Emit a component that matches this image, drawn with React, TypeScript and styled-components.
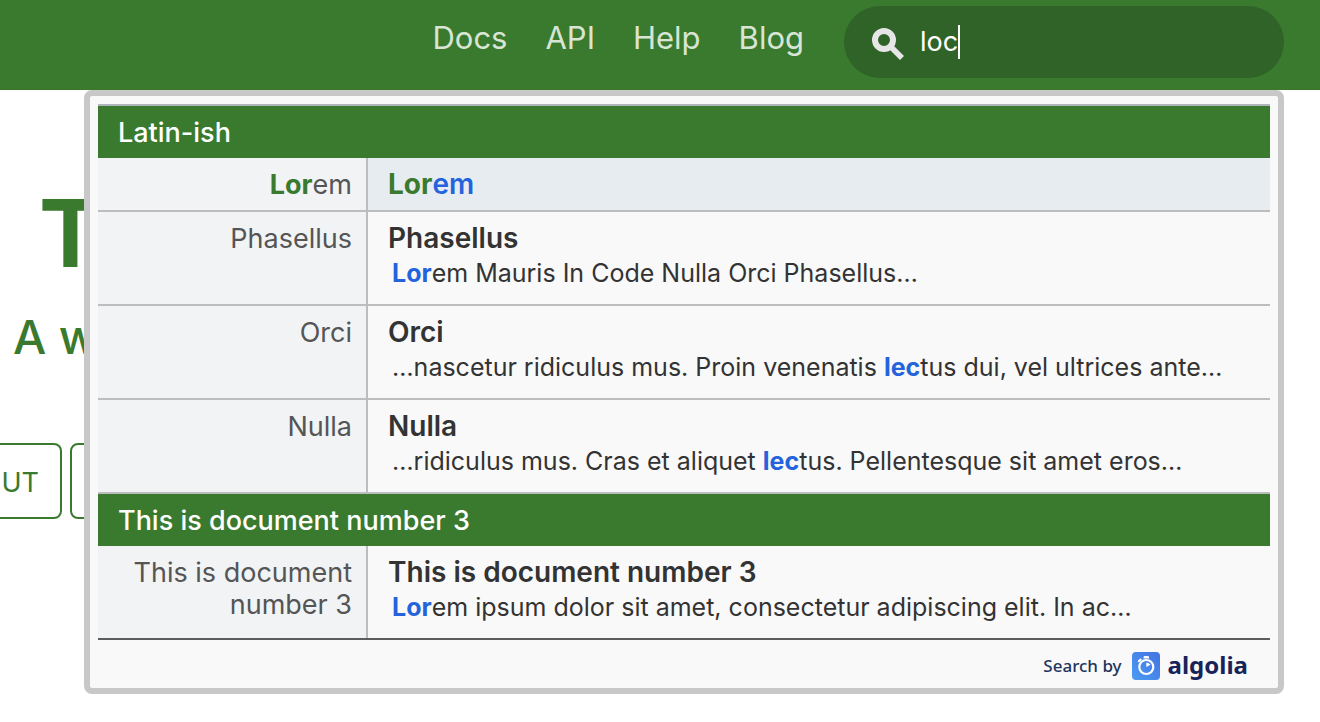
import React, { useState } from 'react';
import styled, { createGlobalStyle } from 'styled-components';

const green = '#3a7a2e';
const blue = '#2463dc';

const GlobalStyle = createGlobalStyle`
  *, *::before, *::after { box-sizing: border-box; }
  body {
    margin: 0;
    min-height: 100vh;
    background: #fff;
    color: #333;
    font-family: Inter, "Liberation Sans", sans-serif;
  }
`;

const Header = styled.header`
  position: relative;
  display: flex;
  justify-content: flex-end;
  gap: 40px;
  height: 90px;
  padding: 6px 36px 0 0;
  background: ${green};
`;

const Nav = styled.nav`
  display: flex;
  gap: 38px;
  padding-top: 12px;
`;

const NavLink = styled.a`
  color: #d8e5d5;
  font-size: 31px;
  font-weight: 400;
  line-height: 40px;
  text-decoration: none;
`;

const SearchBox = styled.label`
  display: flex;
  align-items: center;
  width: 440px;
  height: 72px;
  padding: 0 28px;
  border-radius: 36px;
  background: #2f6327;
`;

const SearchIcon = styled.svg`
  width: 32px;
  height: 32px;
  margin: 4px 16px 0 0;
`;

const SearchInput = styled.input`
  field-sizing: content;
  padding: 0;
  border: 0;
  outline: 0;
  background: transparent;
  color: #fff;
  caret-color: transparent;
  font-family: inherit;
  font-size: 27px;
  font-weight: 400;
  line-height: 36px;
`;

const Caret = styled.span`
  width: 2px;
  height: 34px;
  background: #fff;
`;

const Menu = styled.div`
  position: absolute;
  z-index: 1;
  top: 90px;
  left: 84px;
  right: 36px;
  padding: 8px;
  border: 6px solid #c8c8c8;
  border-radius: 8px;
  background: #f9f9f9;
`;

const Results = styled.div`
  border-top: 2px solid #b0b5bc;
  border-bottom: 2px solid #5c5c5e;
`;

const SectionTitle = styled.h2`
  margin: 0;
  padding: 11px 20px 9px;
  background: ${green};
  color: #fff;
  font-size: 27px;
  font-weight: 500;
  line-height: 32px;
`;

const Row = styled.a<{ $last?: boolean }>`
  display: grid;
  grid-template-columns: 270px 1fr;
  border-bottom: ${(p) => (p.$last ? 0 : '2px solid #bcbdbe')};
  color: #333;
  text-decoration: none;
`;

const Category = styled.span`
  padding: 11px 14px 9px;
  border-right: 2px solid #bcbdbe;
  background: #f1f3f5;
  color: #555;
  font-size: 27px;
  line-height: 32px;
  text-align: right;
`;

const Detail = styled.span<{ $active?: boolean; $short?: boolean }>`
  display: flex;
  flex-direction: column;
  gap: 3px;
  padding: 10px 20px ${(p) => (p.$short ? 10 : 15)}px;
  background: ${(p) => (p.$active ? '#e7ecf1' : 'transparent')};
`;

const Title = styled.span<{ $active?: boolean }>`
  color: ${(p) => (p.$active ? blue : '#333')};
  font-size: 28px;
  font-weight: 600;
  line-height: 32px;
`;

const Snippet = styled.span`
  padding-left: 4px;
  font-size: 25px;
  line-height: 32px;
  white-space: nowrap;
`;

const Mark = styled.b<{ $color: string }>`
  color: ${(p) => p.$color};
  font-weight: 700;
`;

const Footer = styled.footer`
  display: flex;
  align-items: center;
  justify-content: flex-end;
  height: 40px;
  padding: 12px 22px 0 0;
  color: #22355c;
  font-family: "Noto Sans", sans-serif;
  font-size: 17px;
  font-weight: 500;
  line-height: 24px;
`;

const Algolia = styled.a`
  display: flex;
  align-items: center;
  gap: 8px;
  margin-left: 10px;
  color: #182359;
  font-size: 24px;
  font-weight: 700;
  line-height: 28px;
  text-decoration: none;
`;

const Wordmark = styled.span`
  padding-bottom: 2px;
`;

const Hero = styled.main`
  padding-top: 85px;
  color: ${green};
`;

const HeroTitle = styled.h1`
  margin: 0;
  padding-left: 39px;
  font-size: 94px;
  font-weight: 700;
  line-height: 116px;
`;

const Tagline = styled.p`
  margin: 17px 0 77px;
  padding-left: 13px;
  font-size: 47px;
  font-weight: 500;
  line-height: 58px;
`;

const Actions = styled.div`
  display: flex;
  gap: 8px;
`;

const HeroButton = styled.button<{ $cut?: boolean }>`
  width: 62px;
  height: 76px;
  padding: 2px 21px 0 0;
  border: 2px solid ${green};
  border-left-width: ${(p) => (p.$cut ? 0 : 2)}px;
  border-radius: ${(p) => (p.$cut ? '0 8px 8px 0' : '8px')};
  background: #fff;
  color: ${green};
  font-family: inherit;
  font-size: 27px;
  text-align: right;
`;

type Part = string | { mark: string };
interface Hit {
  category: Part[];
  title: Part[];
  snippet?: Part[];
}

const sections: { name: string; hits: Hit[] }[] = [
  {
    name: 'Latin-ish',
    hits: [
      { category: [{ mark: 'Lor' }, 'em'], title: [{ mark: 'Lor' }, 'em'] },
      {
        category: ['Phasellus'],
        title: ['Phasellus'],
        snippet: [{ mark: 'Lor' }, 'em Mauris In Code Nulla Orci Phasellus…'],
      },
      {
        category: ['Orci'],
        title: ['Orci'],
        snippet: [
          '…nascetur ridiculus mus. Proin venenatis ',
          { mark: 'lec' },
          'tus dui, vel ultrices ante…',
        ],
      },
      {
        category: ['Nulla'],
        title: ['Nulla'],
        snippet: [
          '…ridiculus mus. Cras et aliquet ',
          { mark: 'lec' },
          'tus. Pellentesque sit amet eros…',
        ],
      },
    ],
  },
  {
    name: 'This is document number 3',
    hits: [
      {
        category: ['This is document number 3'],
        title: ['This is document number 3'],
        snippet: [{ mark: 'Lor' }, 'em ipsum dolor sit amet, consectetur adipiscing elit. In ac…'],
      },
    ],
  },
];

function Marked({ parts, color }: { parts: Part[]; color: string }) {
  return (
    <span>
      {parts.map((p, i) =>
        typeof p === 'string' ? p : <Mark key={i} $color={color}>{p.mark}</Mark>
      )}
    </span>
  );
}

function StopwatchLogo() {
  return (
    <svg width="28" height="28" viewBox="0 0 28 28" aria-hidden="true">
      <defs>
        <linearGradient id="tile" x1="0" y1="1" x2="1" y2="0">
          <stop offset="0" stopColor="#4a9cf3" />
          <stop offset="1" stopColor="#4472e2" />
        </linearGradient>
      </defs>
      <rect width="28" height="28" rx="4" fill="url(#tile)" />
      <circle cx="14.3" cy="15" r="7" fill="none" stroke="#fff" strokeWidth="2.2" />
      <path d="M11.6 6.6V5.2q0-1.2 1.2-1.2h3q1.2 0 1.2 1.2v1.4z" fill="#fff" />
      <path d="M6.8 9.2 8.6 7.5" stroke="#fff" strokeWidth="2" strokeLinecap="round" />
      <path d="M14.3 15v-4.6q2.8.1 4.2 2.3z" fill="#fff" />
    </svg>
  );
}

export default function App() {
  const [query, setQuery] = useState('loc');
  return (
    <>
      <GlobalStyle />
      <Header>
        <Nav>
          {['Docs', 'API', 'Help', 'Blog'].map((name) => (
            <NavLink key={name} href="#">{name}</NavLink>
          ))}
        </Nav>
        <SearchBox>
          <SearchIcon viewBox="0 0 32 32" aria-hidden="true">
            <circle cx="12" cy="12" r="9" fill="none" stroke="#e6e6e6" strokeWidth="6" />
            <path d="M18.5 18.5 30 30" stroke="#e6e6e6" strokeWidth="5.6" />
          </SearchIcon>
          <SearchInput
            type="text"
            aria-label="Search"
            value={query}
            onChange={(e) => setQuery(e.target.value)}
          />
          <Caret />
        </SearchBox>
        <Menu>
          <Results>
            {sections.map((section) => (
              <section key={section.name}>
                <SectionTitle>{section.name}</SectionTitle>
                {section.hits.map((hit, i) => {
                  const active = !hit.snippet;
                  return (
                    <Row
                      key={i}
                      href="#"
                      $last={section === sections[sections.length - 1]}
                    >
                      <Category><Marked parts={hit.category} color={green} /></Category>
                      <Detail $active={active} $short={active}>
                        <Title $active={active}>
                          <Marked parts={hit.title} color={green} />
                        </Title>
                        {hit.snippet && (
                          <Snippet><Marked parts={hit.snippet} color={blue} /></Snippet>
                        )}
                      </Detail>
                    </Row>
                  );
                })}
              </section>
            ))}
          </Results>
          <Footer>
            Search by
            <Algolia href="#">
              <StopwatchLogo />
              <Wordmark>algolia</Wordmark>
            </Algolia>
          </Footer>
        </Menu>
      </Header>
      <Hero>
        <HeroTitle>T</HeroTitle>
        <Tagline>A w</Tagline>
        <Actions>
          <HeroButton $cut>UT</HeroButton>
          <HeroButton aria-label="More" />
        </Actions>
      </Hero>
    </>
  );
}
